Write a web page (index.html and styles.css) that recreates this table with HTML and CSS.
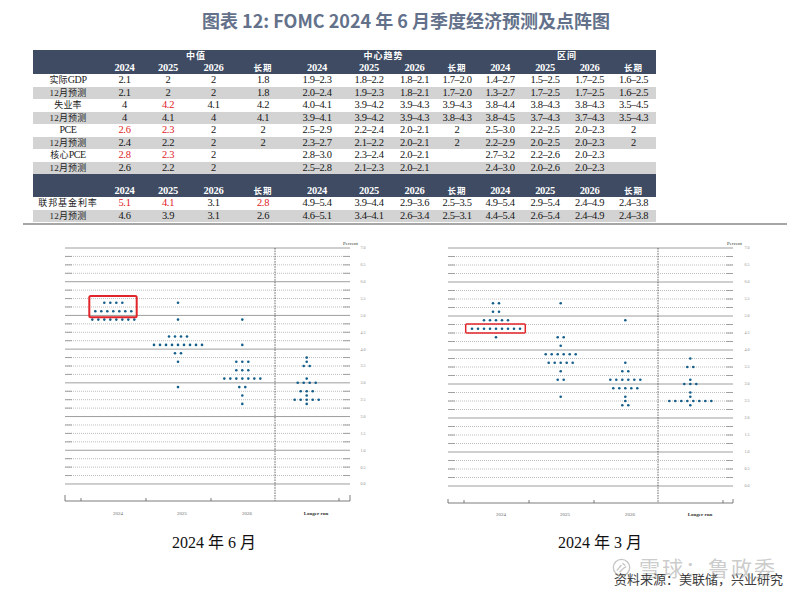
FILE: index.html
```html
<!DOCTYPE html>
<html lang="zh-CN">
<head>
<meta charset="utf-8">
<title>图表 12: FOMC 2024 年 6 月季度经济预测及点阵图</title>
<link rel="stylesheet" href="styles.css">
</head>
<body>
<h1 class="title">图表 12: FOMC 2024 年 6 月季度经济预测及点阵图</h1>

<table class="sep">
  <colgroup>
    <col><col><col><col><col><col><col><col><col><col><col><col><col>
  </colgroup>
  <thead>
    <tr class="hd1">
      <th></th><th colspan="4">中值</th><th colspan="4">中心趋势</th><th colspan="4">区间</th>
    </tr>
    <tr class="hd2">
      <th></th>
      <th>2024</th><th>2025</th><th>2026</th><th class="cj">长期</th>
      <th>2024</th><th>2025</th><th>2026</th><th class="cj">长期</th>
      <th>2024</th><th>2025</th><th>2026</th><th class="cj">长期</th>
    </tr>
  </thead>
  <tbody>
    <tr>
      <td class="lab">实际<span class="lat">GDP</span></td>
      <td>2.1</td><td>2</td><td>2</td><td>1.8</td>
      <td>1.9–2.3</td><td>1.8–2.2</td><td>1.8–2.1</td><td>1.7–2.0</td>
      <td>1.4–2.7</td><td>1.5–2.5</td><td>1.7–2.5</td><td>1.6–2.5</td>
    </tr>
    <tr class="alt">
      <td class="lab">12月预测</td>
      <td>2.1</td><td>2</td><td>2</td><td>1.8</td>
      <td>2.0–2.4</td><td>1.9–2.3</td><td>1.8–2.1</td><td>1.7–2.0</td>
      <td>1.3–2.7</td><td>1.7–2.5</td><td>1.7–2.5</td><td>1.6–2.5</td>
    </tr>
    <tr>
      <td class="lab">失业率</td>
      <td>4</td><td class="red">4.2</td><td>4.1</td><td>4.2</td>
      <td>4.0–4.1</td><td>3.9–4.2</td><td>3.9–4.3</td><td>3.9–4.3</td>
      <td>3.8–4.4</td><td>3.8–4.3</td><td>3.8–4.3</td><td>3.5–4.5</td>
    </tr>
    <tr class="alt">
      <td class="lab">12月预测</td>
      <td>4</td><td>4.1</td><td>4</td><td>4.1</td>
      <td>3.9–4.1</td><td>3.9–4.2</td><td>3.9–4.3</td><td>3.8–4.3</td>
      <td>3.8–4.5</td><td>3.7–4.3</td><td>3.7–4.3</td><td>3.5–4.3</td>
    </tr>
    <tr>
      <td class="lab"><span class="lat">PCE</span></td>
      <td class="red">2.6</td><td class="red">2.3</td><td>2</td><td>2</td>
      <td>2.5–2.9</td><td>2.2–2.4</td><td>2.0–2.1</td><td>2</td>
      <td>2.5–3.0</td><td>2.2–2.5</td><td>2.0–2.3</td><td>2</td>
    </tr>
    <tr class="alt">
      <td class="lab">12月预测</td>
      <td>2.4</td><td>2.2</td><td>2</td><td>2</td>
      <td>2.3–2.7</td><td>2.1–2.2</td><td>2.0–2.1</td><td>2</td>
      <td>2.2–2.9</td><td>2.0–2.5</td><td>2.0–2.3</td><td>2</td>
    </tr>
    <tr>
      <td class="lab">核心<span class="lat">PCE</span></td>
      <td class="red">2.8</td><td class="red">2.3</td><td>2</td><td></td>
      <td>2.8–3.0</td><td>2.3–2.4</td><td>2.0–2.1</td><td></td>
      <td>2.7–3.2</td><td>2.2–2.6</td><td>2.0–2.3</td><td></td>
    </tr>
    <tr class="alt">
      <td class="lab">12月预测</td>
      <td>2.6</td><td>2.2</td><td>2</td><td></td>
      <td>2.5–2.8</td><td>2.1–2.3</td><td>2.0–2.1</td><td></td>
      <td>2.4–3.0</td><td>2.0–2.6</td><td>2.0–2.3</td><td></td>
    </tr>
    <tr class="hd3">
      <th></th>
      <th>2024</th><th>2025</th><th>2026</th><th class="cj">长期</th>
      <th>2024</th><th>2025</th><th>2026</th><th class="cj">长期</th>
      <th>2024</th><th>2025</th><th>2026</th><th class="cj">长期</th>
    </tr>
    <tr>
      <td class="lab wide">联邦基金利率</td>
      <td class="red">5.1</td><td class="red">4.1</td><td>3.1</td><td class="red">2.8</td>
      <td>4.9–5.4</td><td>3.9–4.4</td><td>2.9–3.6</td><td>2.5–3.5</td>
      <td>4.9–5.4</td><td>2.9–5.4</td><td>2.4–4.9</td><td>2.4–3.8</td>
    </tr>
    <tr class="alt">
      <td class="lab">12月预测</td>
      <td>4.6</td><td>3.9</td><td>3.1</td><td>2.6</td>
      <td>4.6–5.1</td><td>3.4–4.1</td><td>2.6–3.4</td><td>2.5–3.1</td>
      <td>4.4–5.4</td><td>2.6–5.4</td><td>2.4–4.9</td><td>2.4–3.8</td>
    </tr>
  </tbody>
</table>

<div class="rule"></div>

<div class="charts">
  <figure class="fig fig-left">
    <svg class="dotplot" viewBox="0 0 360 284" width="360" height="284">
      <defs>
        <path id="gmin" vector-effect="non-scaling-stroke" d="M0 1H285M0 2H285M0 3H285M0 5H285M0 6H285M0 7H285M0 9H285M0 10H285M0 11H285M0 13H285M0 14H285M0 15H285M0 17H285M0 18H285M0 19H285M0 21H285M0 22H285M0 23H285M0 25H285M0 26H285M0 27H285"/>
        <path id="gmaj" vector-effect="non-scaling-stroke" d="M0 0H285M0 4H285M0 8H285M0 12H285M0 16H285M0 20H285M0 24H285M0 28H285"/>
        <clipPath id="ends"><rect x="-1" y="-1" width="8" height="30"/><rect x="278" y="-1" width="8" height="30"/></clipPath>
      </defs>
      <g transform="translate(25 10) scale(1 8.4275)">
        <use href="#gmin" class="g-minor"/>
        <use href="#gmin" class="g-cap" clip-path="url(#ends)"/>
        <use href="#gmaj" class="g-major"/>
      </g>
      <path class="vdash" d="M235 10V263"/>
      <path class="axis" d="M25 257V263H310V257M41 260V263M106 260V263M171 260V263M299 260V263"/>
      <text class="pct" x="318" y="7">Percent</text>
      <g class="ylab">
        <text x="323" y="11.4">7.0</text><text x="323" y="28.3">6.5</text><text x="323" y="45.1">6.0</text>
        <text x="323" y="62">5.5</text><text x="323" y="78.8">5.0</text><text x="323" y="95.7">4.5</text>
        <text x="323" y="112.5">4.0</text><text x="323" y="129.4">3.5</text><text x="323" y="146.2">3.0</text>
        <text x="323" y="163.1">2.5</text><text x="323" y="180">2.0</text><text x="323" y="196.8">1.5</text>
        <text x="323" y="213.7">1.0</text><text x="323" y="230.5">0.5</text><text x="323" y="247.4">0.0</text>
      </g>
      <g class="xlab">
        <text x="78" y="277">2024</text><text x="142" y="277">2025</text><text x="207" y="277">2026</text>
        <text class="lr" x="276" y="277">Longer run</text>
      </g>
      <g class="dots">
        <circle r="1.3" cx="64.3" cy="64.8"/><circle r="1.3" cx="70.3" cy="64.8"/><circle r="1.3" cx="76.3" cy="64.8"/><circle r="1.3" cx="82.3" cy="64.8"/>
        <circle r="1.3" cx="55.3" cy="73.2"/><circle r="1.3" cx="61.3" cy="73.2"/><circle r="1.3" cx="67.3" cy="73.2"/><circle r="1.3" cx="73.3" cy="73.2"/><circle r="1.3" cx="79.3" cy="73.2"/><circle r="1.3" cx="85.3" cy="73.2"/><circle r="1.3" cx="91.3" cy="73.2"/>
        <circle r="1.3" cx="52.3" cy="81.6"/><circle r="1.3" cx="58.3" cy="81.6"/><circle r="1.3" cx="64.3" cy="81.6"/><circle r="1.3" cx="70.3" cy="81.6"/><circle r="1.3" cx="76.3" cy="81.6"/><circle r="1.3" cx="82.3" cy="81.6"/><circle r="1.3" cx="88.3" cy="81.6"/><circle r="1.3" cx="94.3" cy="81.6"/>

        <circle r="1.3" cx="138" cy="64.8"/>
        <circle r="1.3" cx="138" cy="81.6"/>
        <circle r="1.3" cx="129" cy="98.5"/><circle r="1.3" cx="135" cy="98.5"/><circle r="1.3" cx="141" cy="98.5"/><circle r="1.3" cx="147" cy="98.5"/>
        <circle r="1.3" cx="114" cy="106.9"/><circle r="1.3" cx="120" cy="106.9"/><circle r="1.3" cx="126" cy="106.9"/><circle r="1.3" cx="132" cy="106.9"/><circle r="1.3" cx="138" cy="106.9"/><circle r="1.3" cx="144" cy="106.9"/><circle r="1.3" cx="150" cy="106.9"/><circle r="1.3" cx="156" cy="106.9"/><circle r="1.3" cx="162" cy="106.9"/>
        <circle r="1.3" cx="135" cy="115.3"/><circle r="1.3" cx="141" cy="115.3"/>
        <circle r="1.3" cx="138" cy="123.8"/>
        <circle r="1.3" cx="138" cy="149.1"/>

        <circle r="1.3" cx="202.3" cy="81.6"/>
        <circle r="1.3" cx="202.3" cy="106.9"/>
        <circle r="1.3" cx="196.3" cy="123.8"/><circle r="1.3" cx="202.3" cy="123.8"/><circle r="1.3" cx="208.3" cy="123.8"/>
        <circle r="1.3" cx="196.3" cy="132.2"/><circle r="1.3" cx="202.3" cy="132.2"/><circle r="1.3" cx="208.3" cy="132.2"/>
        <circle r="1.3" cx="184.3" cy="140.6"/><circle r="1.3" cx="190.3" cy="140.6"/><circle r="1.3" cx="196.3" cy="140.6"/><circle r="1.3" cx="202.3" cy="140.6"/><circle r="1.3" cx="208.3" cy="140.6"/><circle r="1.3" cx="214.3" cy="140.6"/><circle r="1.3" cx="220.3" cy="140.6"/>
        <circle r="1.3" cx="199.3" cy="149.1"/><circle r="1.3" cx="205.3" cy="149.1"/>
        <circle r="1.3" cx="202.3" cy="157.5"/>
        <circle r="1.3" cx="202.3" cy="165.9"/>

        <circle r="1.3" cx="266.7" cy="119.6"/>
        <circle r="1.3" cx="266.7" cy="123.8"/>
        <circle r="1.3" cx="263.7" cy="128"/><circle r="1.3" cx="269.7" cy="128"/>
        <circle r="1.3" cx="266.7" cy="140.6"/>
        <circle r="1.3" cx="257.7" cy="144.8"/><circle r="1.3" cx="263.7" cy="144.8"/><circle r="1.3" cx="269.7" cy="144.8"/><circle r="1.3" cx="275.7" cy="144.8"/>
        <circle r="1.3" cx="260.7" cy="153.3"/><circle r="1.3" cx="266.7" cy="153.3"/><circle r="1.3" cx="272.7" cy="153.3"/>
        <circle r="1.3" cx="266.7" cy="157.5"/>
        <circle r="1.3" cx="254.7" cy="161.7"/><circle r="1.3" cx="260.7" cy="161.7"/><circle r="1.3" cx="266.7" cy="161.7"/><circle r="1.3" cx="272.7" cy="161.7"/><circle r="1.3" cx="278.7" cy="161.7"/>
        <circle r="1.3" cx="266.7" cy="165.9"/>
      </g>
      <rect class="hl hl-thick" x="49.3" y="58" width="47.4" height="21.3" rx="1.5"/>
    </svg>
    <figcaption class="cap">2024 年 6 月</figcaption>
  </figure>

  <figure class="fig fig-right">
    <svg class="dotplot" viewBox="0 0 360 284" width="360" height="284">
      <g transform="translate(28 10) scale(1 8.5)">
        <use href="#gmin" class="g-minor"/>
        <use href="#gmin" class="g-cap" clip-path="url(#ends)"/>
        <use href="#gmaj" class="g-major"/>
      </g>
      <path class="vdash" d="M238 10V265"/>
      <path class="axis" d="M28 261V265H313V261M44 262V265M109 262V265M174 262V265M303 262V265"/>
      <text class="pct" x="322" y="7">Percent</text>
      <g class="ylab">
        <text x="327" y="11.4">7.0</text><text x="327" y="28.4">6.5</text><text x="327" y="45.4">6.0</text>
        <text x="327" y="62.4">5.5</text><text x="327" y="79.4">5.0</text><text x="327" y="96.4">4.5</text>
        <text x="327" y="113.4">4.0</text><text x="327" y="130.4">3.5</text><text x="327" y="147.4">3.0</text>
        <text x="327" y="164.4">2.5</text><text x="327" y="181.4">2.0</text><text x="327" y="198.4">1.5</text>
        <text x="327" y="215.4">1.0</text><text x="327" y="232.4">0.5</text><text x="327" y="249.4">0.0</text>
      </g>
      <g class="xlab">
        <text x="81" y="278">2024</text><text x="145" y="278">2025</text><text x="210" y="278">2026</text>
        <text class="lr" x="280" y="278">Longer run</text>
      </g>
      <g class="dots">
        <circle r="1.3" cx="73" cy="65.25"/><circle r="1.3" cx="79" cy="65.25"/>
        <circle r="1.3" cx="73" cy="73.75"/><circle r="1.3" cx="79" cy="73.75"/>
        <circle r="1.3" cx="64" cy="82.25"/><circle r="1.3" cx="70" cy="82.25"/><circle r="1.3" cx="76" cy="82.25"/><circle r="1.3" cx="82" cy="82.25"/><circle r="1.3" cx="88" cy="82.25"/>
        <circle r="1.3" cx="52" cy="90.75"/><circle r="1.3" cx="58" cy="90.75"/><circle r="1.3" cx="64" cy="90.75"/><circle r="1.3" cx="70" cy="90.75"/><circle r="1.3" cx="76" cy="90.75"/><circle r="1.3" cx="82" cy="90.75"/><circle r="1.3" cx="88" cy="90.75"/><circle r="1.3" cx="94" cy="90.75"/><circle r="1.3" cx="100" cy="90.75"/>
        <circle r="1.3" cx="76" cy="99.25"/>

        <circle r="1.3" cx="140.7" cy="65.25"/>
        <circle r="1.3" cx="137.7" cy="99.25"/><circle r="1.3" cx="143.7" cy="99.25"/>
        <circle r="1.3" cx="140.7" cy="107.75"/>
        <circle r="1.3" cx="125.7" cy="116.25"/><circle r="1.3" cx="131.7" cy="116.25"/><circle r="1.3" cx="137.7" cy="116.25"/><circle r="1.3" cx="143.7" cy="116.25"/><circle r="1.3" cx="149.7" cy="116.25"/><circle r="1.3" cx="155.7" cy="116.25"/>
        <circle r="1.3" cx="128.7" cy="124.75"/><circle r="1.3" cx="134.7" cy="124.75"/><circle r="1.3" cx="140.7" cy="124.75"/><circle r="1.3" cx="146.7" cy="124.75"/><circle r="1.3" cx="152.7" cy="124.75"/>
        <circle r="1.3" cx="140.7" cy="133.25"/>
        <circle r="1.3" cx="137.7" cy="141.75"/><circle r="1.3" cx="143.7" cy="141.75"/>
        <circle r="1.3" cx="140.7" cy="158.75"/>

        <circle r="1.3" cx="205.3" cy="82.25"/>
        <circle r="1.3" cx="205.3" cy="124.75"/>
        <circle r="1.3" cx="202.3" cy="133.25"/><circle r="1.3" cx="208.3" cy="133.25"/>
        <circle r="1.3" cx="190.3" cy="141.75"/><circle r="1.3" cx="196.3" cy="141.75"/><circle r="1.3" cx="202.3" cy="141.75"/><circle r="1.3" cx="208.3" cy="141.75"/><circle r="1.3" cx="214.3" cy="141.75"/><circle r="1.3" cx="220.3" cy="141.75"/>
        <circle r="1.3" cx="193.3" cy="150.25"/><circle r="1.3" cx="199.3" cy="150.25"/><circle r="1.3" cx="205.3" cy="150.25"/><circle r="1.3" cx="211.3" cy="150.25"/><circle r="1.3" cx="217.3" cy="150.25"/>
        <circle r="1.3" cx="205.3" cy="158.75"/>
        <circle r="1.3" cx="205.3" cy="163"/>
        <circle r="1.3" cx="202.3" cy="167.25"/><circle r="1.3" cx="208.3" cy="167.25"/>

        <circle r="1.3" cx="270.3" cy="120.5"/>
        <circle r="1.3" cx="267.3" cy="129"/><circle r="1.3" cx="273.3" cy="129"/>
        <circle r="1.3" cx="270.3" cy="141.75"/>
        <circle r="1.3" cx="264.3" cy="146"/><circle r="1.3" cx="270.3" cy="146"/><circle r="1.3" cx="276.3" cy="146"/>
        <circle r="1.3" cx="270.3" cy="154.5"/>
        <circle r="1.3" cx="270.3" cy="158.75"/>
        <circle r="1.3" cx="249.3" cy="163"/><circle r="1.3" cx="255.3" cy="163"/><circle r="1.3" cx="261.3" cy="163"/><circle r="1.3" cx="267.3" cy="163"/><circle r="1.3" cx="273.3" cy="163"/><circle r="1.3" cx="279.3" cy="163"/><circle r="1.3" cx="285.3" cy="163"/><circle r="1.3" cx="291.3" cy="163"/>
        <circle r="1.3" cx="270.3" cy="167.25"/>
      </g>
      <rect class="hl" x="45.7" y="86" width="59.6" height="9" rx="1"/>
    </svg>
    <figcaption class="cap">2024 年 3 月</figcaption>
  </figure>
</div>

<div class="source">
  <span class="source-text">资料来源：美联储，兴业研究</span>
  <div class="wm">
    <svg class="wm-logo" viewBox="0 0 20 20" width="19" height="19">
      <circle cx="10" cy="10" r="8.6"/>
      <path d="M5 13c2-1 3-4 5-5.5M8 15c2-2 4-5 7-6M11 5.5l3 2.5"/>
    </svg>
    <span class="wm-text">雪球：鲁政委</span>
  </div>
</div>
</body>
</html>
```

FILE: styles.css
```css
html, body {
  margin: 0;
  padding: 0;
  background: #ffffff;
}

body {
  width: 800px;
  height: 596px;
  overflow: hidden;
  font-family: "Liberation Serif", "Noto Sans CJK SC", serif;
  color: #111;
}

.title {
  margin: 8px 0 0;
  padding-left: 12px;
  text-align: center;
  font-family: "Noto Sans CJK SC", "Noto Sans", sans-serif;
  font-weight: 700;
  font-size: 18px;
  line-height: 24px;
  color: #63718a;
}

/* ---------- table ---------- */
.sep {
  margin: 18px 0 0 33px;
  width: 623px;
  border-collapse: collapse;
  border-spacing: 0;
  table-layout: fixed;
}

.sep col:nth-child(1)  { width: 70px; }
.sep col:nth-child(2)  { width: 43px; }
.sep col:nth-child(3)  { width: 44px; }
.sep col:nth-child(4)  { width: 47px; }
.sep col:nth-child(5)  { width: 52px; }
.sep col:nth-child(6)  { width: 56px; }
.sep col:nth-child(7)  { width: 48px; }
.sep col:nth-child(8)  { width: 43px; }
.sep col:nth-child(9)  { width: 42px; }
.sep col:nth-child(10) { width: 44px; }
.sep col:nth-child(11) { width: 46px; }
.sep col:nth-child(12) { width: 43px; }
.sep col:nth-child(13) { width: 45px; }

.sep th {
  background: #3e4b62;
  color: #ffffff;
  padding: 0;
  text-align: center;
  white-space: nowrap;
}

.hd1 th {
  height: 11px;
  font-family: "Noto Sans CJK SC", sans-serif;
  font-weight: 700;
  font-size: 9px;
  line-height: 10px;
  vertical-align: middle;
  letter-spacing: 1px;
}

.hd2 th {
  height: 12px;
  font-family: "Liberation Serif", serif;
  font-weight: 700;
  font-size: 10.5px;
  line-height: 11px;
  vertical-align: bottom;
  padding-bottom: 1px;
  letter-spacing: -0.3px;
}

.hd3 th {
  height: 22px;
  font-family: "Liberation Serif", serif;
  font-weight: 700;
  font-size: 10.5px;
  line-height: 11px;
  vertical-align: bottom;
  padding-bottom: 1px;
  letter-spacing: -0.3px;
}

.sep th.cj {
  font-family: "Noto Sans CJK SC", sans-serif;
  font-size: 8.5px;
  letter-spacing: 1px;
}

.sep td {
  height: 12.5px;
  padding: 0;
  text-align: center;
  vertical-align: middle;
  font-size: 10.5px;
  line-height: 12px;
  letter-spacing: -0.35px;
  white-space: nowrap;
  color: #161616;
}

.sep td.lab {
  font-family: "Liberation Serif", "Noto Sans CJK SC", serif;
  font-size: 9px;
  letter-spacing: 0.2px;
  color: #222;
}

.sep td.wide {
  letter-spacing: 0.9px;
}

.lat {
  font-size: 10px;
  letter-spacing: -0.4px;
}

.sep tr.alt td {
  background: #d3d3d3;
}

.sep td.red {
  color: #de1a1f;
}

.rule {
  margin: 1px 13px 0 23px;
  border-top: 2px solid #a6a6a6;
}

/* ---------- charts ---------- */
.charts {
  display: flex;
  gap: 20px;
  margin: 13px 0 0 40px;
}

.fig {
  margin: 0;
  width: 360px;
  display: flex;
  flex-direction: column;
}

.dotplot {
  display: block;
  width: 360px;
  height: 284px;
}

.g-minor {
  fill: none;
  stroke: #bdbdbd;
  stroke-width: 1;
  stroke-dasharray: 1 1;
}

.g-cap {
  fill: none;
  stroke: #a0a0a0;
  stroke-width: 1;
}

.g-major {
  fill: none;
  stroke: #9e9e9e;
  stroke-width: 1;
}

.vdash {
  fill: none;
  stroke: #4a4a4a;
  stroke-width: 0.8;
  stroke-dasharray: 1.6 1;
}

.axis {
  fill: none;
  stroke: #5a5a5a;
  stroke-width: 0.8;
}

.pct {
  font-family: "Liberation Serif", serif;
  font-size: 5px;
  fill: #333;
  text-anchor: end;
}

.ylab text {
  font-family: "Liberation Serif", serif;
  font-size: 4px;
  fill: #8a8a8a;
  text-anchor: middle;
}

.xlab text {
  font-family: "Liberation Serif", serif;
  font-size: 5px;
  fill: #6a6a6a;
  text-anchor: middle;
}

.xlab text.lr {
  font-weight: 700;
  fill: #333;
}

.dots {
  fill: #135e8b;
}

.hl {
  fill: none;
  stroke: #e2252b;
  stroke-width: 1.5;
}

.hl-thick {
  stroke-width: 2;
}

.cap {
  margin-top: 11px;
  font-family: "Liberation Serif", "Noto Sans CJK SC", serif;
  font-size: 16px;
  line-height: 20px;
  text-align: center;
  color: #111;
}

.fig-left .cap {
  padding-right: 12px;
}

/* ---------- source + watermark ---------- */
.source {
  position: relative;
  margin: 18px 17px 0 0;
  text-align: right;
  font-family: "Noto Sans CJK SC", sans-serif;
  font-size: 13px;
  line-height: 16px;
  color: #3c3c3c;
}

.wm {
  position: absolute;
  right: 6px;
  top: -16px;
  display: flex;
  align-items: center;
  gap: 8px;
  opacity: 0.5;
}

.wm-logo {
  display: block;
  fill: none;
  stroke: #8c8c8c;
  stroke-width: 1.4;
}

.wm-text {
  font-family: "Noto Sans CJK SC", sans-serif;
  font-size: 21px;
  line-height: 24px;
  letter-spacing: 2px;
  color: #9a9a9a;
}
```
